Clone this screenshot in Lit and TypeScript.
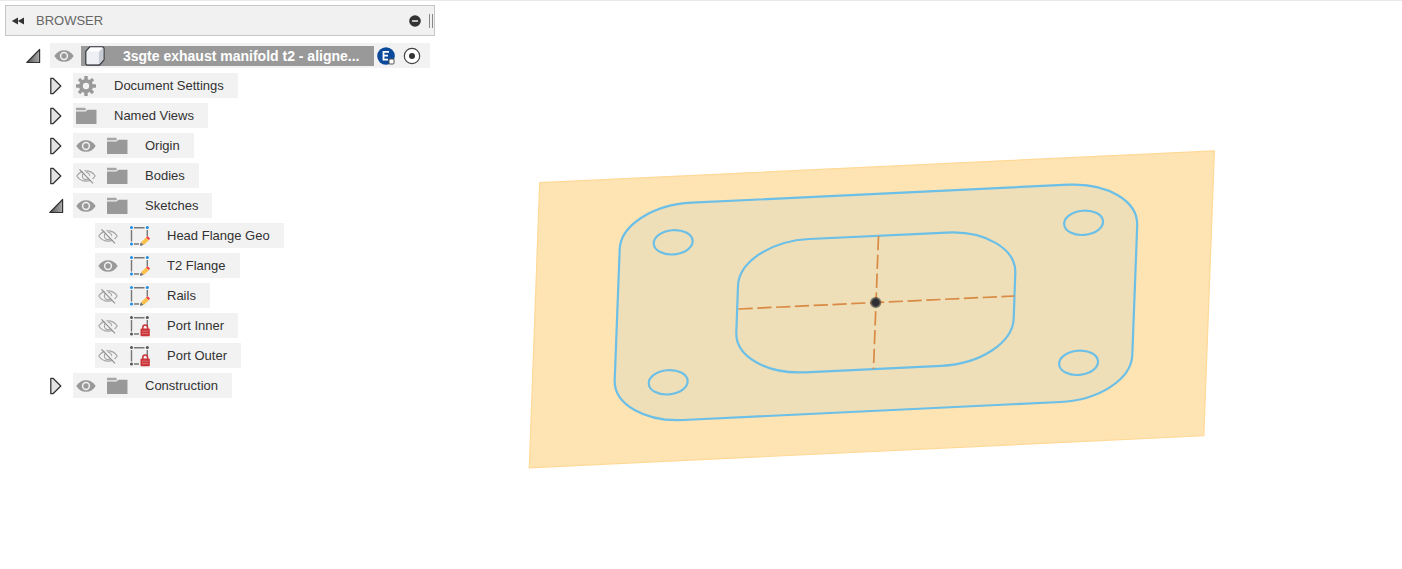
import { LitElement, html, svg, css, nothing } from "lit";
import { customElement, property, state } from "lit/decorators.js";

type Kind = "gear" | "folder" | "sketch" | "locked";

interface Entry {
  name: string;
  kind: Kind;
  visible?: boolean;
  children?: Entry[];
  leaf?: boolean;
}

const ENTRIES: Entry[] = [
  { name: "Document Settings", kind: "gear" },
  { name: "Named Views", kind: "folder" },
  { name: "Origin", kind: "folder", visible: true },
  { name: "Bodies", kind: "folder", visible: false },
  {
    name: "Sketches",
    kind: "folder",
    visible: true,
    children: [
      { name: "Head Flange Geo", kind: "sketch", visible: false, leaf: true },
      { name: "T2 Flange", kind: "sketch", visible: true, leaf: true },
      { name: "Rails", kind: "sketch", visible: false, leaf: true },
      { name: "Port Inner", kind: "locked", visible: false, leaf: true },
      { name: "Port Outer", kind: "locked", visible: false, leaf: true },
    ],
  },
  { name: "Construction", kind: "folder", visible: true },
];

const icon = (body: unknown) =>
  html`<svg class="icon" width="20" height="20" viewBox="0 0 20 20" aria-hidden="true">${body}</svg>`;

const eye = icon(svg`
  <path d="M.3 10C2.700 6 6 4.200 10 4.200s7.300 1.800 9.700 5.800c-2.400 4-5.700 5.800-9.700 5.800S2.700 14 .3 10z" fill="#999"/>
  <circle cx="10" cy="10" r="3.400" fill="none" stroke="#f2f2f2" stroke-width="1.500"/>
`);

const eyeOff = icon(svg`
  <path d="M.8 10c2.200-3.400 5.400-5.200 9.200-5.200s7 1.800 9.200 5.200c-2.200 3.400-5.400 5.200-9.200 5.200S3 13.400.8 10z" fill="none" stroke="#a6a6a6" stroke-width="1.200"/>
  <circle cx="10" cy="10" r="3.600" fill="none" stroke="#a6a6a6" stroke-width="1.200"/>
  <path d="M5 2.600l13 13.400" stroke="#f2f2f2" stroke-width="1.800"/>
  <path d="M3.500 3.300l13.500 14" stroke="#8c8c8c" stroke-width="1.100"/>
`);

const folder = icon(svg`
  <path d="M0 1.800h9.200l1 2.400H0z" fill="#999" opacity=".85"/>
  <path d="M0 5.400h9.600l2-1.600H20.500V18H0z" fill="#999"/>
`);

const gear = icon(svg`
  <g fill="#999">
    ${[0, 45, 90, 135].map(
      (a) => svg`<rect x="8.300" y="0" width="3.400" height="20" rx=".6" transform="rotate(${a} 10 10)"/>`
    )}
    <circle cx="10" cy="10" r="7"/>
  </g>
  <circle cx="10" cy="10" r="3.200" fill="#f2f2f2"/>
`);

const frame = (dot: string) => svg`
  <path d="M5 1.800h10.500M2.500 4v11.500M18.300 4v6.500M5 18h5" stroke="#777" stroke-width="1.400" fill="none"/>
  <g fill="${dot}">
    <circle cx="2.500" cy="1.600" r="1.500"/>
    <circle cx="18.300" cy="1.600" r="1.500"/>
    <circle cx="2.500" cy="17.900" r="1.500"/>
  </g>
`;

const sketch = icon(svg`
  ${frame("#1e8ce0")}
  <path d="M12 16.200l5-4.700 2.900 2.700-5.200 4.900z" fill="#fbc04a"/>
  <path d="M17 11.500l1-.9q.5-.4 1 0l1.600 1.500q.6.600.1 1.100l-.9.900z" fill="#f03e46"/>
  <path d="M12 16.400l2.600 2.400-2.300 1h-1.300v-1.800z" fill="#777"/>
`);

const locked = icon(svg`
  ${frame("#555")}
  <path d="M13.800 13.500v-2a2.400 2.400 0 0 1 4.800 0v2" fill="none" stroke="#c93439" stroke-width="1.500"/>
  <rect x="11.500" y="12.600" width="9.300" height="7.600" rx="1" fill="#c93439"/>
  <path d="M13 15.200h6.300M13 17.600h6.300" stroke="#e0797c" stroke-width=".9"/>
`);

const KIND_ICONS: Record<Kind, unknown> = { gear, folder, sketch, locked };

const arrow = (open: boolean) => html`
  <svg class="icon" width="16" height="20" viewBox="0 0 16 20" aria-hidden="true">
    <defs>
      <linearGradient id="shade" x1="0" x2="1" y1="0" y2="0">
        <stop offset="0" stop-color="#555" />
        <stop offset="1" stop-color="#aaa" />
      </linearGradient>
    </defs>
    ${open
      ? svg`<path d="M13.600 3.500v13H.8z" fill="url(#shade)" stroke="#333" stroke-width="1.200" stroke-linejoin="round"/>`
      : svg`<path d="M1.800 2.300h2.200L11.800 10 4 17.700H1.800z" fill="#e3e3e3" stroke="#333" stroke-width="1.300" stroke-linejoin="round"/>`}
  </svg>
`;

@customElement("tree-row")
export class TreeRow extends LitElement {
  @property({ attribute: false }) entry!: Entry;
  @state() private open = false;
  @state() private shown = false;

  static styles = css`
    :host {
      display: block;
    }
    .row {
      display: flex;
      align-items: center;
      height: 25px;
      margin-bottom: 5px;
    }
    button {
      display: flex;
      padding: 0;
      border: 0;
      background: none;
      cursor: pointer;
    }
    .toggle {
      width: 24px;
    }
    .chip {
      display: flex;
      align-items: center;
      gap: 11px;
      height: 25px;
      padding: 0 14px 0 3px;
      background: #f2f2f2;
    }
    .icon {
      display: block;
      overflow: visible;
    }
    .label {
      padding-left: 7px;
      white-space: nowrap;
    }
    .children {
      padding-left: 46px;
    }
  `;

  connectedCallback() {
    super.connectedCallback();
    this.open = !!this.entry.children;
    this.shown = !!this.entry.visible;
  }

  render() {
    const { name, kind, visible, children, leaf } = this.entry;
    return html`
      <div class="row">
        ${leaf
          ? nothing
          : html`<button
              class="toggle"
              aria-label="Expand ${name}"
              aria-expanded=${this.open}
              @click=${() => (this.open = !this.open)}
            >${arrow(this.open)}</button>`}
        <div class="chip">
          ${visible === undefined
            ? nothing
            : html`<button
                aria-label="Show ${name}"
                aria-pressed=${this.shown}
                @click=${() => (this.shown = !this.shown)}
              >${this.shown ? eye : eyeOff}</button>`}
          ${KIND_ICONS[kind]}
          <span class="label">${name}</span>
        </div>
      </div>
      ${this.open && children
        ? html`<div class="children">
            ${children.map((c) => html`<tree-row .entry=${c}></tree-row>`)}
          </div>`
        : nothing}
    `;
  }
}

@customElement("sketch-view")
export class SketchView extends LitElement {
  static styles = css`
    :host {
      display: block;
    }
    svg {
      display: block;
      width: 100%;
      height: 100%;
    }
    .plane {
      fill: #fee3b3;
      stroke: #ffd997;
      stroke-width: 1.2;
    }
    .profile {
      fill: #efdfb8;
      stroke: #6cbfe6;
      stroke-width: 2.2;
    }
    .axis {
      stroke: #d98a45;
      stroke-width: 1.7;
      stroke-dasharray: 14.3 4.5;
    }
  `;

  /** Closed loop of straight edges whose corners are skewed quarter circles. */
  private loop(corners: number[][]) {
    const k = 0.5523;
    return (
      corners
        .map(([ax, ay, cx, cy, bx, by], i) => {
          const p = [ax + (cx - ax) * k, ay + (cy - ay) * k, bx + (cx - bx) * k, by + (cy - by) * k];
          return `${i ? "L" : "M"}${ax} ${ay}C${p.map((n) => n.toFixed(1)).join(" ")} ${bx} ${by}`;
        })
        .join("") + "Z"
    );
  }

  render() {
    const outer = this.loop([
      [619.7, 249.3, 621.2, 206.2, 691.7, 202.7],
      [1068.7, 184.7, 1138.8, 181.3, 1137.2, 225.5],
      [1132.3, 355, 1130.7, 398.7, 1060.3, 402],
      [683.3, 420, 613.1, 423.4, 614.7, 380],
    ]);
    const inner = this.loop([
      [738, 286, 739.5, 242.4, 809.3, 239],
      [947, 232.6, 1016.9, 229.3, 1015.3, 273],
      [1013.7, 318.5, 1012.1, 362.4, 941.5, 365.8],
      [805, 372.3, 734.8, 375.7, 736.3, 332.5],
    ]);
    const holes = [
      [673.2, 242.3],
      [1083.6, 222.8],
      [1078.6, 362.8],
      [668.2, 382.3],
    ];
    return html`
      <svg viewBox="0 0 1402 569" role="img" aria-label="Flange sketch">
        <defs>
          <radialGradient id="origin">
            <stop offset=".55" stop-color="#2d2f33" />
            <stop offset="1" stop-color="#2d2f33" stop-opacity=".35" />
          </radialGradient>
        </defs>
        <path class="plane" d="M539.700 182.700L1214.400 150.800 1203.800 435.800 529.300 467.800z" />
        <path class="profile" d=${outer} />
        ${holes.map(
          ([x, y]) => svg`<ellipse class="profile" cx=${x} cy=${y} rx="19.500" ry="12.100" transform="rotate(-5 ${x} ${y})"/>`
        )}
        <path class="profile" d=${inner} />
        <path class="axis" d="M738.500 309L1014.500 296" />
        <path class="axis" d="M878.500 236L873.500 369" />
        <circle cx="875.700" cy="302.500" r="5.800" fill="url(#origin)" />
      </svg>
    `;
  }
}

@customElement("app-root")
export class AppRoot extends LitElement {
  @state() private open = true;

  static styles = css`
    :host {
      display: grid;
      grid-template: 100vh / 100%;
      height: 100vh;
      background: linear-gradient(#e9e9e9, #e9e9e9) top / 100% 1px no-repeat #fff;
      color: #333;
      font: 13px/16px "Liberation Sans", Arial, sans-serif;
      overflow: hidden;
    }
    sketch-view,
    .panel {
      grid-area: 1 / 1;
      min-height: 0;
    }
    .panel {
      z-index: 1;
      justify-self: start;
      align-self: start;
      width: 430px;
      padding: 5px 0 0 5px;
    }
    button {
      display: flex;
      padding: 0;
      border: 0;
      background: none;
      cursor: pointer;
    }
    .icon {
      display: block;
      overflow: visible;
    }
    header {
      display: flex;
      align-items: center;
      height: 31px;
      box-sizing: border-box;
      padding-left: 5px;
      border: 1px solid #c6c6c6;
      background: #f1f1f1;
      color: #666;
    }
    h1 {
      flex: 1;
      margin: 0 0 0 10px;
      font-size: 13px;
      font-weight: 400;
    }
    .grip {
      width: 4px;
      height: 14px;
      margin: 0 1px 0 8px;
      border-left: 1px solid #888;
      border-right: 1px solid #888;
      box-sizing: border-box;
    }
    .root {
      display: flex;
      align-items: center;
      height: 25px;
      margin: 7px 0 5px 21px;
    }
    .toggle {
      width: 24px;
    }
    .chip {
      flex: 1;
      display: flex;
      align-items: center;
      height: 25px;
      min-width: 0;
      margin-right: 5px;
      padding: 0 9px 0 4px;
      background: #f2f2f2;
    }
    .document {
      flex: 1;
      display: flex;
      align-items: center;
      gap: 18px;
      height: 20px;
      min-width: 0;
      margin: 0 3px 0 7px;
      padding: 0 4px;
      background: #999;
      color: #fff;
      font-size: 14px;
      font-weight: 700;
    }
    .document .icon {
      flex: none;
    }
    .name {
      white-space: nowrap;
    }
    .badge {
      margin-right: 8px;
    }
    .tree {
      padding-left: 44px;
    }
  `;

  render() {
    return html`
      <sketch-view></sketch-view>
      <aside class="panel">
        <header>
          <button aria-label="Collapse browser">
            <svg class="icon" width="15" height="10" viewBox="0 0 15 10">
              <path d="M7 1.500v7L.8 5zM13 1.500v7L6.800 5z" fill="#333" />
            </svg>
          </button>
          <h1>BROWSER</h1>
          <button aria-label="Minimize">
            <svg class="icon" width="12" height="12" viewBox="0 0 12 12">
              <circle cx="6" cy="6" r="5.800" fill="#333" />
              <path d="M3 6h6" stroke="#f1f1f1" stroke-width="1.500" />
            </svg>
          </button>
          <span class="grip"></span>
        </header>
        <div class="root">
          <button class="toggle" aria-label="Expand document" aria-expanded=${this.open} @click=${() => (this.open = !this.open)}>
            ${arrow(this.open)}
          </button>
          <div class="chip">
            <button aria-label="Show document">${eye}</button>
            <div class="document">
              <svg class="icon" width="20" height="20" viewBox="0 0 20 20" aria-hidden="true">
                <path d="M.8 5.500L5 .8h12q2 0 2 2v11L14.500 19H2.500Q.8 19 .8 17z" fill="#dfe2e8" stroke="#3c3f46" stroke-width="1.300" stroke-linejoin="round" />
                <path d="M1.500 5.800L5.300 1.500h12.200L14 5.800z" fill="#fff" />
                <path d="M14 6l4.300-4v11.500L14 18.200z" fill="#c9cdd6" />
                <rect x="1.800" y="6" width="12" height="12.200" fill="#eef0f5" />
              </svg>
              <span class="name">3sgte exhaust manifold t2 - aligne...</span>
            </div>
            <svg class="icon badge" width="18" height="18" viewBox="0 0 18 18" aria-hidden="true">
              <circle cx="9" cy="9" r="8.800" fill="#0b4a9b" />
              <path d="M6.500 4v9.500M6 4.800h6M6 8.700h5M6 12.700h5" stroke="#fff" stroke-width="1.800" fill="none" />
              <rect x="12" y="12" width="5" height="5" rx="1" fill="#fff" stroke="#555" stroke-width="1" />
            </svg>
            <button aria-label="Activate document">
              <svg class="icon" width="18" height="18" viewBox="0 0 18 18">
                <circle cx="9" cy="9" r="7.700" fill="#fff" stroke="#444" stroke-width="1.200" />
                <circle cx="9" cy="9" r="3" fill="#333" />
              </svg>
            </button>
          </div>
        </div>
        ${this.open
          ? html`<div class="tree">${ENTRIES.map((e) => html`<tree-row .entry=${e}></tree-row>`)}</div>`
          : nothing}
      </aside>
    `;
  }
}
